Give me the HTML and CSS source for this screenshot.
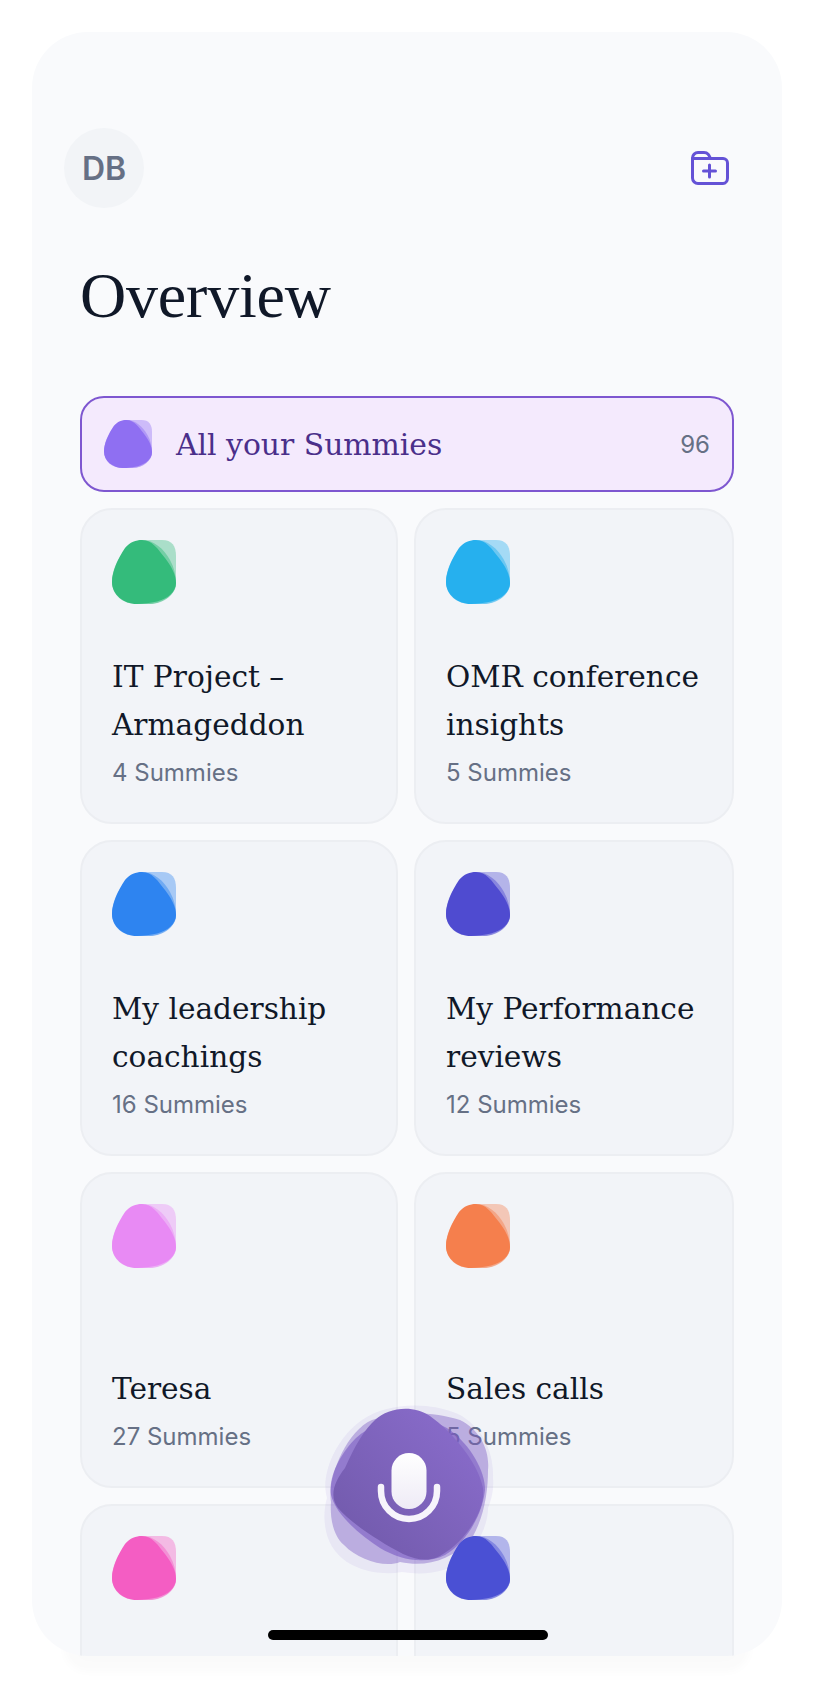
FILE: index.html
```html
<!DOCTYPE html>
<html lang="en">
<head>
<meta charset="utf-8">
<title>Overview</title>
<link rel="stylesheet" href="styles.css">
</head>
<body>
<svg class="defs" width="0" height="0" aria-hidden="true">
  <symbol id="blob" viewBox="0 0 64 64">
    <path opacity=".38" d="M36 0H50C60 0 64 6 64 16V42C64 54 52 64 38 64H24C10 64 0 54 0 42C0 20 18 0 36 0Z"/>
    <path opacity=".45" d="M30 0C42 0 52 9 58 20C62 27 64 35 64 44C64 54 52 63 38 64C26 65 14 63 7 56C2 52 0 46 0 40C1 30 6 20 12 13C18 6 24 0 30 0Z"/>
    <path d="M30 0C40 0 46 9 53 18C59 26 64 34 64 43C64 52 55 59 45 61.5C38 63 31 64 25 64C12 64 0 55 0 42C0 32 6 18 13 8C18 2 24 0 30 0Z"/>
  </symbol>
</svg>
<main class="phone">
  <header class="top">
    <div class="avatar">DB</div>
    <svg class="folder" width="38" height="34" viewBox="0 0 38 34" fill="none" stroke="currentColor" stroke-width="3" stroke-linecap="round" stroke-linejoin="round">
      <path d="M7 1.5H13C17 1.5 18 4 19.5 7.5H32C34.5 7.5 36.5 9.5 36.5 12V27C36.5 30 34.5 32.5 32 32.5H7C4 32.5 1.5 30 1.5 27V7C1.5 4 4 1.5 7 1.5Z"/>
      <path d="M1.5 7.5H19.5M18.5 14V26M12.5 20H24.5"/>
    </svg>
  </header>
  <h1 class="title">Overview</h1>
  <section class="content">
    <div class="all-row">
      <svg class="blob blob-all"><use href="#blob"/></svg>
      <span class="all-name">All your Summies</span>
      <span class="all-count">96</span>
    </div>
    <div class="grid">
      <article class="card">
        <svg class="blob c-green"><use href="#blob"/></svg>
        <h2 class="name">IT Project – Armageddon</h2>
        <p class="count">4 Summies</p>
      </article>
      <article class="card">
        <svg class="blob c-sky"><use href="#blob"/></svg>
        <h2 class="name">OMR conference insights</h2>
        <p class="count">5 Summies</p>
      </article>
      <article class="card">
        <svg class="blob c-blue"><use href="#blob"/></svg>
        <h2 class="name">My leadership coachings</h2>
        <p class="count">16 Summies</p>
      </article>
      <article class="card">
        <svg class="blob c-indigo"><use href="#blob"/></svg>
        <h2 class="name">My Performance reviews</h2>
        <p class="count">12 Summies</p>
      </article>
      <article class="card">
        <svg class="blob c-orchid"><use href="#blob"/></svg>
        <h2 class="name">Teresa</h2>
        <p class="count">27 Summies</p>
      </article>
      <article class="card">
        <svg class="blob c-orange"><use href="#blob"/></svg>
        <h2 class="name">Sales calls</h2>
        <p class="count">5 Summies</p>
      </article>
      <article class="card">
        <svg class="blob c-pink"><use href="#blob"/></svg>
      </article>
      <article class="card">
        <svg class="blob blob-top c-royal"><use href="#blob"/></svg>
      </article>
    </div>
  </section>
  <svg class="mic" width="220" height="220" viewBox="0 0 220 220" aria-label="Record">
    <defs>
      <linearGradient id="micfill" x1="1" y1="0" x2="0" y2="1">
        <stop offset="0" stop-color="#8c6ecf"/>
        <stop offset="1" stop-color="#6f58a8"/>
      </linearGradient>
      <linearGradient id="micwhite" x1="0" y1="0" x2="0" y2="1">
        <stop offset="0" stop-color="#ffffff"/>
        <stop offset="1" stop-color="#eeebf6"/>
      </linearGradient>
    </defs>
    <path fill="#8a5fd8" opacity=".09" d="M62 30C85 14 125 10 158 24C182 36 194 62 193 88C194 98 192 108 188 118C188 135 178 155 165 168C150 182 125 186 102 182C80 186 50 180 36 162C24 148 22 125 27 108C20 85 36 48 62 30Z"/>
    <path fill="#7b5cc4" opacity=".42" d="M72 30C100 20 135 22 160 30C180 40 190 60 188 80C188 100 185 125 172 148C150 172 125 177 100 172C85 178 58 170 44 155C32 145 30 125 31 112C27 90 45 42 72 30Z"/>
    <path fill="#7b5cc4" opacity=".62" d="M56 48C78 26 130 25 150 40C170 55 185 80 185 100C183 120 170 150 145 165C125 175 100 170 80 158C60 145 36 125 31 105C28 85 42 62 56 48Z"/>
    <path fill="url(#micfill)" d="M75 30C88 18 112 14 130 26C152 42 178 72 183 98C186 118 168 150 140 166C128 172 116 170 103 164C80 152 52 134 38 118C29 106 34 92 45 78C55 55 65 39 75 30Z"/>
    <rect x="91.5" y="63" width="35" height="56" rx="17.5" fill="url(#micwhite)"/>
    <path fill="none" stroke="#f6f4fb" stroke-width="6.5" stroke-linecap="round" d="M81 97V101A28 28 0 0 0 137 101V97"/>
  </svg>
  <div class="home-bar"></div>
</main>
</body>
</html>
```

FILE: styles.css
```css
* {
  box-sizing: border-box;
}

html,
body {
  margin: 0;
  background: #ffffff;
}

body {
  height: 1688px;
  overflow: hidden;
  padding: 32px;
  font-family: "Inter", "Liberation Sans", sans-serif;
}

.defs {
  position: absolute;
}

.phone {
  position: relative;
  width: 750px;
  height: 1624px;
  padding-top: 96px;
  overflow: hidden;
  border-radius: 56px;
  background: #f9fafc;
  box-shadow: 0 48px 8px -32px rgba(0, 0, 0, 0.02);
}

.top {
  display: flex;
  align-items: center;
  justify-content: space-between;
  padding: 0 53px 0 32px;
}

.avatar {
  display: flex;
  align-items: center;
  justify-content: center;
  width: 80px;
  height: 80px;
  border-radius: 50%;
  background: #f2f4f7;
  color: #667085;
  font-size: 32px;
  font-weight: 600;
}

.folder {
  display: block;
  color: #6452d6;
}

.title {
  margin: 50px 0 0;
  padding: 0 48px;
  color: #101828;
  font-family: "Liberation Serif", serif;
  font-size: 64px;
  font-weight: 400;
  line-height: 76px;
  letter-spacing: -0.2px;
}

.content {
  display: flex;
  flex-direction: column;
  gap: 16px;
  margin-top: 62px;
  padding: 0 48px;
}

.all-row {
  display: flex;
  align-items: center;
  height: 96px;
  padding: 0 22px;
  border: 2px solid #7e57d0;
  border-radius: 24px;
  background: #f4eafd;
}

.blob {
  display: block;
  flex: none;
  width: 64px;
  height: 64px;
  fill: currentColor;
}

.blob-all {
  width: 48px;
  height: 48px;
  color: #8f6ff2;
}

.all-name {
  flex: 1;
  margin-left: 24px;
  color: #4a2f8a;
  font-family: "DejaVu Serif", serif;
  font-size: 29.8px;
}

.all-count {
  color: #667085;
  font-size: 24px;
}

.grid {
  display: grid;
  grid-template-columns: 318px 320px;
  grid-auto-rows: 316px;
  gap: 16px;
}

.card {
  display: flex;
  flex-direction: column;
  padding: 30px 16px 33px 30px;
  border: 2px solid #eceef2;
  border-radius: 32px;
  background: #f2f4f8;
}

.name {
  margin: auto 0 8px;
  color: #101828;
  font-family: "DejaVu Serif", serif;
  font-size: 29.6px;
  font-weight: 400;
  line-height: 48px;
}

.count {
  margin: 0;
  color: #667085;
  font-size: 24px;
  line-height: 32px;
}

.c-green { color: #34bb7b; }
.c-sky { color: #26b0ee; }
.c-blue { color: #2e84f0; }
.c-indigo { color: #4f4bd0; }
.c-orchid { color: #e88af4; }
.c-orange { color: #f57f4d; }
.c-pink { color: #f45dc3; }
.c-royal { color: #4a50d4; }

.blob-top {
  position: relative;
  z-index: 2;
}

.mic {
  position: absolute;
  left: 268px;
  top: 1358px;
  z-index: 1;
}

.home-bar {
  position: absolute;
  left: 236px;
  bottom: 16px;
  z-index: 3;
  width: 280px;
  height: 10px;
  border-radius: 5px;
  background: #000000;
}
```
